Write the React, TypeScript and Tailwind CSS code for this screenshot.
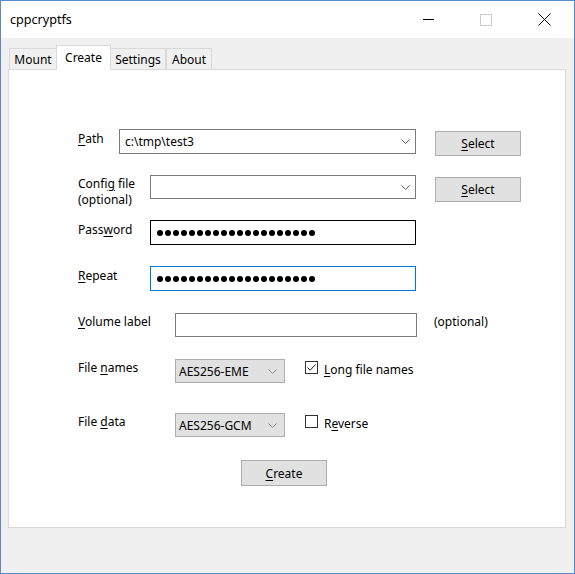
import React from "react";

const font = { fontFamily: '"Noto Sans", "Open Sans", Arial, sans-serif' };

const Chevron = ({ color = "#606060" }: { color?: string }) => (
    <svg width="9" height="5" viewBox="0 0 9 5" className="shrink-0">
        <path d="M0.5 0.5 L4.5 4.5 L8.5 0.5" fill="none" stroke={color} strokeWidth="1" />
    </svg>
);

const Dots = () => (
    <div className="flex gap-[2px] pl-[6px]">
        {Array.from({ length: 20 }).map((_, i) => (
            <div key={i} className="w-[6px] h-[6px] rounded-full bg-black" />
        ))}
    </div>
);

const Button = ({ children, className = "" }: { children: React.ReactNode; className?: string }) => (
    <div
        className={`w-[86px] bg-[#e1e1e1] border border-[#adadad] flex items-center justify-center text-[12px] text-black ${className}`}
    >
        {children}
    </div>
);

const Tab = ({ label, active = false, w }: { label: React.ReactNode; active?: boolean; w: string }) =>
    active ? (
        <div className={`${w} h-[25px] -mb-px relative z-10 bg-white border border-b-0 border-[#d9d9d9] flex items-start justify-center pt-[4px] -mx-[1px]`}>
            {label}
        </div>
    ) : (
        <div className={`${w} h-[21px] bg-[#f0f0f0] border border-b-0 border-[#d9d9d9] flex items-center justify-center pt-[1px]`}>
            {label}
        </div>
    );

export default function App() {
    return (
        <div
            style={font}
            className="w-[575px] h-[574px] border border-[#5b8ac8] flex flex-col bg-[#f0f0f0] text-[12px] text-black leading-[16px] overflow-hidden"
        >
            {/* title bar */}
            <div className="h-[37px] bg-white flex items-center shrink-0">
                <span className="pl-[9px] text-[12.6px] flex-1">cppcryptfs</span>
                <div className="flex mr-[1px]">
                    <div className="w-[58px] h-[37px] flex items-center justify-center">
                        <div className="w-[11px] h-px bg-black" />
                    </div>
                    <div className="w-[58px] h-[37px] flex items-center justify-center">
                        <div className="w-[12px] h-[12px] border border-[#cccccc]" />
                    </div>
                    <div className="w-[58px] h-[37px] flex items-center justify-center">
                        <svg width="13" height="13" viewBox="0 0 13 13">
                            <path d="M0.5 0.5 L12.5 12.5 M12.5 0.5 L0.5 12.5" stroke="#000" strokeWidth="1" />
                        </svg>
                    </div>
                </div>
            </div>

            {/* body */}
            <div className="flex-1 pl-[7px] pt-[7px]">
                <div className="flex items-end h-[24px] pl-[1px]">
                    <Tab w="w-[48px]" label="Mount" />
                    <Tab w="w-[55px]" active label="Create" />
                    <Tab w="w-[56px]" label="Settings" />
                    <Tab w="w-[46px]" label="About" />
                </div>

                <div className="w-[558px] h-[459px] bg-white border border-[#d9d9d9] pt-[59px] pl-[69px]">
                    {/* Path */}
                    <div className="flex items-start h-[46px]">
                        <div className="w-[41px] pt-[2px]">
                            <u className="underline-offset-2">P</u>ath
                        </div>
                        <div className="w-[297px] h-[25px] border border-[#7a7a7a] flex items-center pl-[5px] pr-[5px]">
                            <span className="flex-1">c:\tmp\test3</span>
                            <Chevron />
                        </div>
                        <Button className="ml-[19px] mt-[2px] h-[25px]">
                            <span>
                                <u className="underline-offset-2">S</u>elect
                            </span>
                        </Button>
                    </div>

                    {/* Config file */}
                    <div className="flex items-start h-[45px]">
                        <div className="w-[72px] pt-[1px]">
                            <div>
                                Confi<u className="underline-offset-2">g</u> file
                            </div>
                            <div>(optional)</div>
                        </div>
                        <div className="w-[266px] h-[24px] border border-[#7a7a7a] flex items-center justify-end pr-[5px]">
                            <Chevron />
                        </div>
                        <Button className="ml-[19px] mt-[2px] h-[25px]">
                            <span>
                                <u className="underline-offset-2">S</u>elect
                            </span>
                        </Button>
                    </div>

                    {/* Password */}
                    <div className="flex items-start h-[46px]">
                        <div className="w-[72px] pt-[2px]">
                            Pass<u className="underline-offset-2">w</u>ord
                        </div>
                        <div className="w-[266px] h-[25px] border border-black flex items-center">
                            <Dots />
                        </div>
                    </div>

                    {/* Repeat */}
                    <div className="flex items-start h-[47px]">
                        <div className="w-[72px] pt-[2px]">
                            <u className="underline-offset-2">R</u>epeat
                        </div>
                        <div className="w-[266px] h-[25px] border border-[#0078d7] flex items-center">
                            <Dots />
                        </div>
                    </div>

                    {/* Volume label */}
                    <div className="flex items-start h-[46px]">
                        <div className="w-[97px] pt-[1px]">
                            <u className="underline-offset-2">V</u>olume label
                        </div>
                        <div className="w-[242px] h-[24px] border border-[#7a7a7a]" />
                        <div className="ml-[17px] pt-[1px]">(optional)</div>
                    </div>

                    {/* File names */}
                    <div className="flex items-start h-[54px]">
                        <div className="w-[97px] pt-[1px]">
                            File <u className="underline-offset-2">n</u>ames
                        </div>
                        <div className="w-[110px] h-[24px] bg-[#e1e1e1] border border-[#adadad] flex items-center pl-[3px] pr-[7px] pt-[1px]">
                            <span className="flex-1">AES256-EME</span>
                            <Chevron color="#8a8a8a" />
                        </div>
                        <div className="ml-[20px] mt-[2px] w-[13px] h-[13px] border border-[#333333] flex items-center justify-center">
                            <svg width="11" height="11" viewBox="0 0 11 11">
                                <path d="M1.5 5.5 L4.2 8.2 L9.5 2.5" fill="none" stroke="#222" strokeWidth="1" />
                            </svg>
                        </div>
                        <div className="ml-[6px] pt-[3px]">
                            <u className="underline-offset-2">L</u>ong file names
                        </div>
                    </div>

                    {/* File data */}
                    <div className="flex items-start h-[47px]">
                        <div className="w-[97px] pt-[1px]">
                            File <u className="underline-offset-2">d</u>ata
                        </div>
                        <div className="w-[110px] h-[24px] bg-[#e1e1e1] border border-[#adadad] flex items-center pl-[3px] pr-[7px] pt-[1px]">
                            <span className="flex-1">AES256-GCM</span>
                            <Chevron color="#8a8a8a" />
                        </div>
                        <div className="ml-[20px] mt-[2px] w-[13px] h-[13px] border border-[#333333]" />
                        <div className="ml-[6px] pt-[3px]">
                            R<u className="underline-offset-2">e</u>verse
                        </div>
                    </div>

                    {/* Create */}
                    <div className="flex">
                        <Button className="ml-[163px] h-[26px] pt-[1px]">
                            <span>
                                <u className="underline-offset-2">C</u>reate
                            </span>
                        </Button>
                    </div>
                </div>
            </div>
        </div>
    );
}
